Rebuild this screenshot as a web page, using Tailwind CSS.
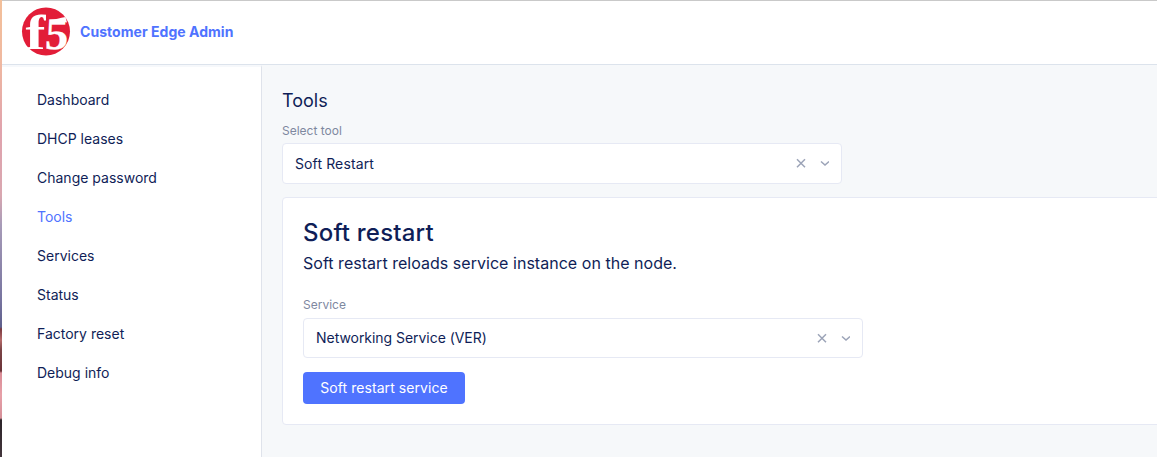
<!DOCTYPE html>
<html lang="en">
<head>
<meta charset="utf-8">
<title>Customer Edge Admin</title>
<script src="https://cdn.jsdelivr.net/npm/@tailwindcss/browser@4"></script>
</head>
<body class="flex h-[457px] w-[1157px] overflow-hidden bg-white font-['Inter',sans-serif] text-[14px] text-[#0f1e57]">
<div class="w-[2px] shrink-0 bg-[linear-gradient(to_bottom,#f3c09a_0px,#f0b9a0_60px,#e0a3ad_130px,#d9a7b0_195px,#a79bb8_225px,#77749f_300px,#5e5f8c_327px,#7a3a40_329px,#b56a6a_340px,#7b4446_350px,#6b3338_371px,#d98c96_373px,#e7a0a8_395px,#d58f98_418px,#2c2429_420px,#43363c_457px)]"></div>
<div class="flex min-w-0 grow flex-col">
  <header class="flex h-[65px] shrink-0 items-center gap-[10px] border-t border-b border-t-[#c9c9c9] border-b-[#dce3ec] pb-[2px] pl-[20px]">
    <svg class="size-[48px] shrink-0 overflow-visible" viewBox="0 0.5 48 48" role="img" aria-label="f5">
      <circle cx="24" cy="24" r="24" fill="#e21d38"/>
      <g fill="#fff" font-family="'Liberation Serif',serif" font-weight="700">
        <text transform="translate(3.500 41) scale(1.220 1)" font-size="49">f</text>
        <text transform="translate(22.500 41) skewX(-3) scale(.93 .9)" font-size="50" stroke="#fff" stroke-width=".3">5</text>
      </g>
      <path d="M28 12.500C33 12 38 10.500 43.500 9.500L45 15c-5-.6-11 .4-17 1z" fill="#fff"/>
    </svg>
    <span class="text-[14px] font-bold tracking-[0.040px] text-[#4f73ff]">Customer Edge Admin</span>
  </header>
  <div class="flex min-h-0 grow">
    <nav class="flex w-[260px] shrink-0 flex-col border-t-2 border-r border-t-[#f6f8fb] border-r-[#dfe3eb] pt-[13px] pl-[35px] leading-[39px]">
      <a>Dashboard</a><a>DHCP leases</a><a>Change password</a><a class="text-[#4f73ff]">Tools</a><a>Services</a><a>Status</a><a>Factory reset</a><a>Debug info</a>
    </nav>
    <main class="min-w-0 grow bg-[#f6f8fa] pt-[24px] pl-[20px]">
      <h1 class="text-[18px] leading-6">Tools</h1>
      <div class="mt-[9px] text-[12px] leading-[18px] text-[#7e889f]">Select tool</div>
      <div class="mt-[3px] flex h-[41px] w-[560px] items-center rounded-[4px] border border-[#e6e9f4] bg-white pb-px pl-[12px]">
        <span class="grow tracking-[0.120px]">Soft Restart</span>
        <svg class="mr-[12px] h-[10px] w-[60px]" viewBox="0 0 60 10" fill="none" stroke="#9ca4b8" stroke-width="1.500"><path d="M28 1.200l8 8M36 1.200l-8 8M52 3.500l4 3.500 4-3.500"/></svg>
      </div>
      <section class="mt-[13px] h-[228px] w-[900px] rounded-[4px] border border-[#e6e9f4] bg-white pt-[19px] pl-[20px]">
        <h2 class="text-[24px] leading-8 font-medium tracking-[0.2px]">Soft restart</h2>
        <p class="text-[16px] leading-7 tracking-[0.030px]">Soft restart reloads service instance on the node.</p>
        <div class="mt-[19px] text-[12px] leading-[18px] text-[#7e889f]">Service</div>
        <div class="mt-[4px] flex h-[40px] w-[560px] items-center rounded-[4px] border border-[#e6e9f4] bg-white pb-px pl-[12px]">
          <span class="grow tracking-[-0.040px]">Networking Service (VER)</span>
          <svg class="mr-[12px] h-[10px] w-[60px]" viewBox="0 0 60 10" fill="none" stroke="#9ca4b8" stroke-width="1.500"><path d="M28 1.200l8 8M36 1.200l-8 8M52 3.500l4 3.500 4-3.500"/></svg>
        </div>
        <button class="mt-[14px] block h-[32px] w-[162px] rounded-[4px] bg-[#4f73ff] pb-px text-[14px] tracking-[0.060px] text-white">Soft restart service</button>
      </section>
    </main>
  </div>
</div>
</body>
</html>
